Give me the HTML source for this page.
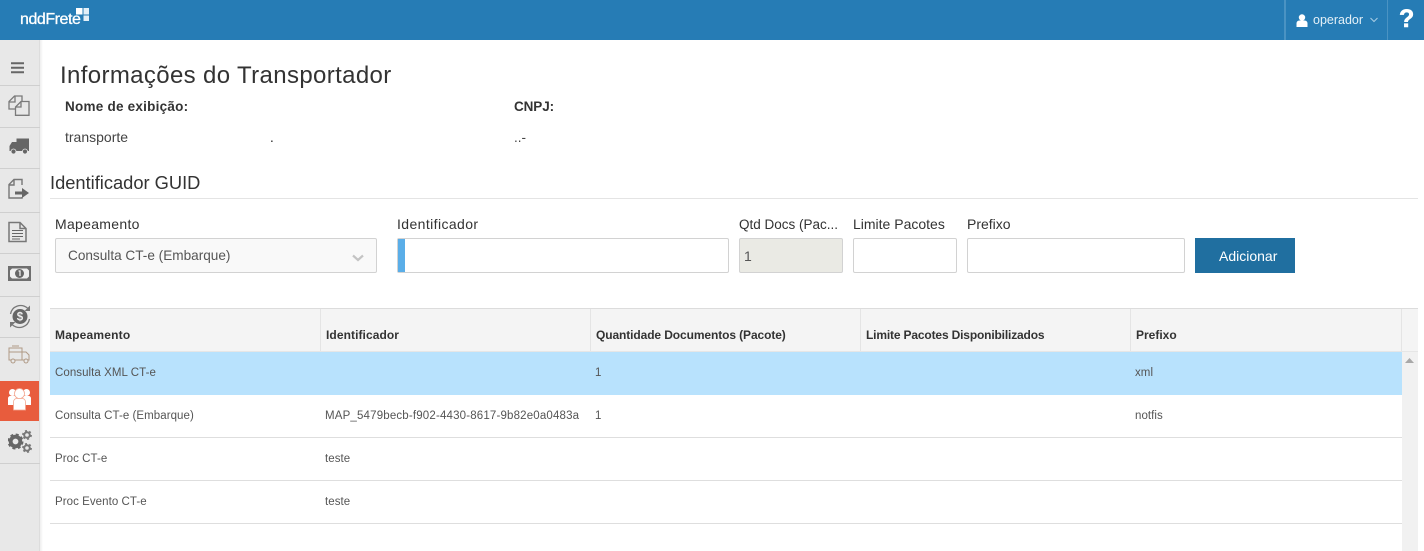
<!DOCTYPE html>
<html lang="pt-BR"><head><meta charset="utf-8"><title>Informações do Transportador</title>
<style>
html,body{margin:0;padding:0;width:1424px;height:551px;overflow:hidden;background:#fff}
body{position:relative;font-family:"Liberation Sans",sans-serif;color:#333}
.a,.t{position:absolute;white-space:nowrap}
.a{box-sizing:border-box}
.t{line-height:18px;height:18px}
.lb{font-size:14px;color:#333;top:215px}
.th{font-size:12px;font-weight:bold;color:#333;top:326px}
.td{font-size:11.5px;color:#555;letter-spacing:.06px}
.inp{border:1px solid #d2d2d2;border-radius:2px;background:#fff;top:238px;height:35px}
.sb{position:absolute;left:0;width:40px;height:1px;background:#cfcfcf}
svg{position:absolute;display:block}
</style></head><body>
<div class="a" style="left:0;top:0;width:1424px;height:40px;background:#267cb5"></div>
<span class="t" style="left:20px;top:11px;color:#fff;font-size:16px;letter-spacing:-.45px;-webkit-text-stroke:.3px #fff">nddFrete</span>
<svg style="left:76px;top:8px" width="13" height="13" viewBox="0 0 13 13"><path d="M0 0h6.500v6.500H0z" fill="#fff"/><path d="M7.500 0H13v6.500H7.500z" fill="#e3f0f8"/><path d="M7.500 7.500H13V13H7.500z" fill="#e3f0f8"/></svg>
<div class="a" style="left:1284px;top:0;width:2px;height:40px;background:#4a93c3"></div>
<div class="a" style="left:1387px;top:0;width:1px;height:40px;background:#4a93c3"></div>
<svg style="left:1296px;top:14px" width="12" height="13" viewBox="0 0 12 13"><circle cx="6" cy="3.500" r="3.200" fill="#fff"/><path d="M.5 13V9.500C.5 7.500 2 6.500 3.500 6.500h5c1.500 0 3 1 3 3V13z" fill="#fff"/></svg>
<span class="t" style="left:1313px;top:11px;color:#e4f0f7;font-size:12.500px">operador</span>
<svg style="left:1370px;top:17px" width="8" height="6" viewBox="0 0 8 6"><path d="M.5 1l3.500 3.500L7.500 1" fill="none" stroke="#a9cde4" stroke-width="1"/></svg>
<span class="t" style="left:1399px;top:7px;color:#fff;font-size:25px;font-weight:bold;line-height:24px;height:24px;-webkit-text-stroke:.6px #fff">?</span>

<div class="a" style="left:0;top:40px;width:40px;height:511px;background:#e8e8e8;border-right:1px solid #ddd"></div>
<div class="a" style="left:40px;top:40px;width:3px;height:511px;background:linear-gradient(90deg,#eee,#fff)"></div>
<div class="sb" style="top:85px"></div><div class="sb" style="top:127px"></div><div class="sb" style="top:168px"></div><div class="sb" style="top:212px"></div><div class="sb" style="top:253px"></div><div class="sb" style="top:296px"></div><div class="sb" style="top:337px"></div><div class="sb" style="top:463px"></div>
<div class="a" style="left:0;top:381px;width:39px;height:40px;background:#e85c3d"></div>

<svg style="left:11px;top:62px" width="14" height="12" viewBox="0 0 14 12"><path d="M0 1.200h13M0 5.700h13M0 10.200h13" stroke="#666" stroke-width="2"/></svg>
<svg style="left:8px;top:95px" width="22" height="21" viewBox="0 0 22 21" fill="none" stroke="#7a7a7a" stroke-width="1.300"><path d="M7 14H1V6.500L6.500 1H14v5"/><path d="M1 7h6V1.500"/><path d="M13 6.500h8v13.800H7.500V12z"/><path d="M13 6.500V12H7.500"/></svg>
<svg style="left:9px;top:138px" width="21" height="17" viewBox="0 0 21 17"><path d="M7.500 0.500h12.500v12.500H7.500zM0.500 8l2.500-4h4.500v9H.5z" fill="#666"/><circle cx="4.500" cy="13.500" r="2.500" fill="#666" stroke="#e8e8e8" stroke-width=".8"/><circle cx="16" cy="13.500" r="2.500" fill="#666" stroke="#e8e8e8" stroke-width=".8"/></svg>
<svg style="left:8px;top:178px" width="22" height="22" viewBox="0 0 22 22"><path d="M14 7V1.500H6L1 6.500V20h13v-1M1 7h5V2" fill="none" stroke="#777" stroke-width="1.400"/><path d="M7 13.500h7V10l7 5-7 5v-3.500H7z" fill="#666"/></svg>
<svg style="left:8px;top:221px" width="19" height="22" viewBox="0 0 19 22" fill="none" stroke="#777" stroke-width="1.500"><path d="M1 1.500h11l6 6V20.500H1zM12 1.500v6h6"/><path d="M4 9.500h11M4 12.500h11M4 15.500h11M4 18h8" stroke="#666" stroke-width="1.100"/></svg>
<svg style="left:8px;top:266px" width="23" height="15" viewBox="0 0 23 15"><path d="M0 0h23v15H0z" fill="#6f6f6f"/><path d="M4 2.500h15l2 2v6l-2 2H4l-2-2v-6z" fill="#eee"/><circle cx="11.500" cy="7.500" r="4.500" fill="#666"/><path d="M10.500 5h1.500v5" stroke="#eee" fill="none" stroke-width="1.300"/></svg>
<svg style="left:9px;top:303px" width="22" height="27" viewBox="0 0 22 27"><circle cx="11" cy="13.500" r="7.500" fill="#666"/><text x="11" y="17.500" font-size="11.500" font-weight="bold" text-anchor="middle" fill="#eee" font-family="Liberation Sans">$</text><path d="M1.500 11C3 3 12 0 18.500 5M20.500 16c-1.500 8-10.500 11-17 6" fill="none" stroke="#777" stroke-width="1.300"/><path d="M21 2.500v5.500h-5.500zM1 24.500V19h5.500z" fill="#777"/></svg>
<svg style="left:8px;top:345px" width="23" height="19" viewBox="0 0 23 19" fill="none" stroke="#b09a86" stroke-width="1"><path d="M1 3h13v12H1zM4 1h7M14 7h4l3 3v5h-7zM1 7h13"/><circle cx="5" cy="16" r="2" fill="#e8e8e8"/><circle cx="18" cy="16" r="2" fill="#e8e8e8"/></svg>
<svg style="left:8px;top:388px" width="23" height="23" viewBox="0 0 23 23" fill="#fff"><circle cx="4.500" cy="4.500" r="3.500"/><circle cx="18.500" cy="4.500" r="3.500"/><path d="M0 10.500C0 9 1 8 2.500 8h18C22 8 23 9 23 10.500V17H0z"/><circle cx="11.500" cy="5.500" r="5" stroke="#f3a892" stroke-width=".8"/><path d="M5.500 14c0-2 1.500-3.500 3-3.500h6c1.500 0 3 1.500 3 3.500v8h-12z" stroke="#f3a892" stroke-width=".8"/></svg>
<svg style="left:8px;top:429px" width="24" height="24" viewBox="0 0 24 24"><circle cx="7.500" cy="12.500" r="4.800" fill="none" stroke="#666" stroke-width="3.800"/><circle cx="7.500" cy="12.500" r="7" fill="none" stroke="#666" stroke-width="2" stroke-dasharray="3 2.500"/><circle cx="19" cy="6" r="2.800" fill="none" stroke="#777" stroke-width="2"/><circle cx="19" cy="6" r="4.200" fill="none" stroke="#777" stroke-width="1.500" stroke-dasharray="2 2.400"/><circle cx="19" cy="19" r="2.800" fill="none" stroke="#777" stroke-width="2"/><circle cx="19" cy="19" r="4.200" fill="none" stroke="#777" stroke-width="1.500" stroke-dasharray="2 2.400"/></svg>

<span class="t" style="left:60px;top:61px;font-size:24px;line-height:30px;height:30px;color:#333;letter-spacing:.36px">Informações do Transportador</span>
<span class="t" style="left:65px;top:98px;font-size:13.500px;font-weight:bold;color:#333;letter-spacing:.24px">Nome de exibição:</span>
<span class="t" style="left:514px;top:98px;font-size:13.500px;font-weight:bold;color:#333;letter-spacing:-.1px">CNPJ:</span>
<span class="t" style="left:65px;top:128px;font-size:14px;color:#444">transporte</span>
<span class="t" style="left:270px;top:129px;font-size:13.500px;color:#222">.</span>
<span class="t" style="left:514px;top:129px;font-size:13.500px;color:#444">..-</span>
<span class="t" style="left:50px;top:173px;font-size:18.300px;line-height:20px;height:20px;color:#333">Identificador GUID</span>
<div class="a" style="left:50px;top:198px;width:1368px;height:1px;background:#e4e4e4"></div>

<span class="t lb" style="left:55px;letter-spacing:.3px">Mapeamento</span>
<span class="t lb" style="left:397px;letter-spacing:.4px">Identificador</span>
<span class="t lb" style="left:739px;top:216px;font-size:13.500px">Qtd Docs (Pac...</span>
<span class="t lb" style="left:853px">Limite Pacotes</span>
<span class="t lb" style="left:967px">Prefixo</span>

<div class="a inp" style="left:55px;width:322px;background:#f9f9f9"></div>
<span class="t" style="left:68px;top:247px;font-size:13.600px;color:#555">Consulta CT-e (Embarque)</span>
<svg style="left:352px;top:254px" width="12" height="8" viewBox="0 0 12 8"><path d="M1 1.500l5 4.500 5-4.500" fill="none" stroke="#c4c4c4" stroke-width="2.200"/></svg>
<div class="a inp" style="left:397px;width:332px"></div>
<div class="a" style="left:398px;top:239px;width:7px;height:33px;background:#5aaee8"></div>
<div class="a inp" style="left:739px;width:104px;background:#eaeae4"></div>
<span class="t" style="left:744px;top:247px;font-size:14px;color:#555">1</span>
<div class="a inp" style="left:853px;width:104px"></div>
<div class="a inp" style="left:967px;width:218px"></div>
<div class="a" style="left:1195px;top:238px;width:100px;height:35px;background:#206fa0"></div>
<span class="t" style="left:1219px;top:247px;font-size:14px;color:#fff">Adicionar</span>

<div class="a" style="left:50px;top:308px;width:1368px;height:44px;background:#f4f4f4;border-top:1px solid #dcdcdc;border-bottom:1px solid #e6e6e6"></div>
<div class="a" style="left:320px;top:309px;width:1px;height:42px;background:#e4e4e4"></div>
<div class="a" style="left:590px;top:309px;width:1px;height:42px;background:#e4e4e4"></div>
<div class="a" style="left:860px;top:309px;width:1px;height:42px;background:#e4e4e4"></div>
<div class="a" style="left:1130px;top:309px;width:1px;height:42px;background:#e4e4e4"></div>
<div class="a" style="left:1401px;top:309px;width:1px;height:42px;background:#e4e4e4"></div>
<span class="t th" style="left:55px;letter-spacing:.2px">Mapeamento</span>
<span class="t th" style="left:326px;letter-spacing:.08px">Identificador</span>
<span class="t th" style="left:596px;letter-spacing:-.1px">Quantidade Documentos (Pacote)</span>
<span class="t th" style="left:866px;letter-spacing:-.16px">Limite Pacotes Disponibilizados</span>
<span class="t th" style="left:1136px">Prefixo</span>

<div class="a" style="left:1402px;top:352px;width:16px;height:199px;background:#f1f1f1"></div>
<svg style="left:1405px;top:358px" width="9" height="5" viewBox="0 0 9 5"><path d="M4.500 0L9 5H0z" fill="#a8a8a8"/></svg>
<div class="a" style="left:50px;top:352px;width:1352px;height:43px;background:#b8e2fd"></div>
<div class="a" style="left:50px;top:437px;width:1352px;height:1px;background:#dedede"></div>
<div class="a" style="left:50px;top:480px;width:1352px;height:1px;background:#dedede"></div>
<div class="a" style="left:50px;top:523px;width:1352px;height:1px;background:#dedede"></div>

<span class="t td" style="left:55px;top:364px">Consulta XML CT-e</span>
<span class="t td" style="left:595px;top:364px">1</span>
<span class="t td" style="left:1135px;top:364px">xml</span>
<span class="t td" style="left:55px;top:407px">Consulta CT-e (Embarque)</span>
<span class="t td" style="left:325px;top:407px;letter-spacing:.17px">MAP_5479becb-f902-4430-8617-9b82e0a0483a</span>
<span class="t td" style="left:595px;top:407px">1</span>
<span class="t td" style="left:1135px;top:407px">notfis</span>
<span class="t td" style="left:55px;top:450px">Proc CT-e</span>
<span class="t td" style="left:325px;top:450px">teste</span>
<span class="t td" style="left:55px;top:493px">Proc Evento CT-e</span>
<span class="t td" style="left:325px;top:493px">teste</span>
</body></html>
